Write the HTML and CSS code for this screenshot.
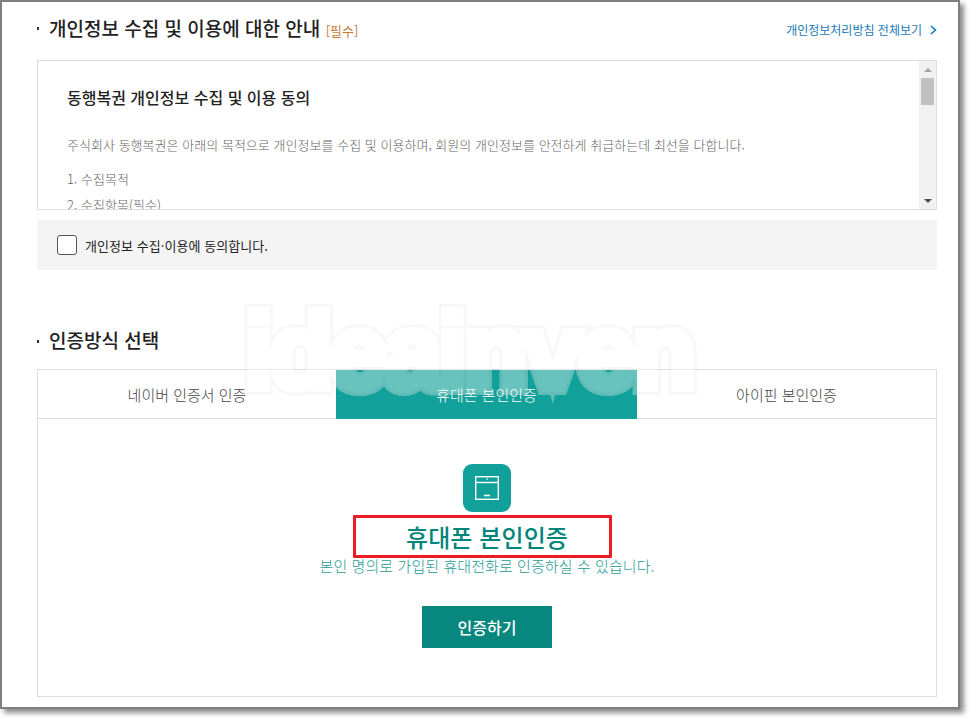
FILE: index.html
```html
<!DOCTYPE html>
<html lang="ko">
<head>
<meta charset="utf-8">
<title>인증방식 선택</title>
<link rel="stylesheet" href="styles.css">
</head>
<body>
<main class="frame">
  <section class="consent">
    <header class="head">
      <h2 class="heading">개인정보 수집 및 이용에 대한 안내 <span class="req">[필수]</span></h2>
      <a class="policy" href="#">개인정보처리방침 전체보기
        <svg class="chev" width="7" height="10" viewBox="0 0 7 10"><path d="M1 1l4.5 4L1 9" fill="none" stroke="#0a7cc0" stroke-width="1.6"/></svg>
      </a>
    </header>
    <div class="terms">
      <div class="terms-body">
        <h3 class="terms-title">동행복권 개인정보 수집 및 이용 동의</h3>
        <p class="terms-text intro">주식회사 동행복권은 아래의 목적으로 개인정보를 수집 및 이용하며, 회원의 개인정보를 안전하게 취급하는데 최선을 다합니다.</p>
        <p class="terms-text">1. 수집목적</p>
        <p class="terms-text">2. 수집항목(필수)</p>
      </div>
      <div class="scrollbar">
        <span class="arrow up"></span>
        <span class="thumb"></span>
        <span class="arrow down"></span>
      </div>
    </div>
    <label class="agree"><span class="check"></span>개인정보 수집·이용에 동의합니다.</label>
  </section>

  <section class="method">
    <h2 class="heading">인증방식 선택</h2>
    <div class="panel">
      <div class="tabs">
        <div class="tab">네이버 인증서 인증</div>
        <div class="tab active">휴대폰 본인인증</div>
        <div class="tab">아이핀 본인인증</div>
      </div>
      <div class="pane">
        <div class="icon">
          <svg width="24" height="24" viewBox="0 0 24 24" fill="none" stroke="#fff" stroke-width="1.4">
            <rect x="0.7" y="0.7" width="22.6" height="22.6"/>
            <path d="M1 6.5h22"/>
            <path d="M11.5 3h1.2"/>
            <path d="M9 19.5h6" stroke-width="1.6"/>
          </svg>
        </div>
        <h3 class="pane-title">휴대폰 본인인증</h3>
        <p class="pane-desc">본인 명의로 가입된 휴대전화로 인증하실 수 있습니다.</p>
        <button class="btn" type="button">인증하기</button>
      </div>
    </div>
  </section>

  <div class="watermark" aria-hidden="true" data-text="ideainven">ideainven</div>
</main>
</body>
</html>
```
FILE: styles.css
```css
* { box-sizing: border-box; }
html, body { margin: 0; padding: 0; background: #fff; }
body {
  width: 969px;
  height: 719px;
  overflow: hidden;
  font-family: "Noto Sans CJK KR", "Noto Sans", sans-serif;
  color: #222;
}
.frame {
  position: relative;
  width: 960px;
  height: 709px;
  padding: 0 21px 0 35px;
  border: 2px solid #7f7f7f;
  background: #fff;
  box-shadow: 4px 4px 5px rgba(0, 0, 0, .45);
}
.head {
  display: flex;
  justify-content: space-between;
  align-items: center;
  height: 58px;
  padding-bottom: 3px;
}
.heading {
  position: relative;
  margin: 0;
  padding-left: 12px;
  font-size: 19px;
  line-height: 26px;
  font-weight: 500;
  color: #222;
}
.heading::before {
  content: "";
  position: absolute;
  left: 0;
  top: 12px;
  width: 2px;
  height: 3px;
  background: #333;
}
.req { font-size: 13px; font-weight: 400; color: #c8793a; }
.policy {
  display: flex;
  align-items: center;
  gap: 8px;
  font-size: 12px;
  color: #1b79b8;
  text-decoration: none;
}
.terms {
  display: flex;
  height: 150px;
  border: 1px solid #ddd;
}
.terms-body {
  flex: 1;
  min-width: 0;
  overflow: hidden;
  padding: 25px 29px 0;
}
.terms-title {
  margin: 0 0 26px;
  font-size: 16px;
  line-height: 22px;
  font-weight: 500;
  color: #222;
}
.terms-text {
  margin: 0 0 6px;
  font-size: 13px;
  line-height: 20px;
  font-weight: 300;
  color: #666;
  letter-spacing: .03px;
  white-space: nowrap;
}
.terms-text.intro { margin-bottom: 14px; padding-top: 1px; }
.scrollbar {
  display: flex;
  flex-direction: column;
  align-items: center;
  width: 17px;
  flex: none;
  background: #f1f1f1;
  padding-top: 7px;
}
.arrow { width: 0; height: 0; border-left: 4px solid transparent; border-right: 4px solid transparent; }
.arrow.up { border-bottom: 4px solid #a3a3a3; }
.arrow.down { margin-top: auto; margin-bottom: 6px; border-top: 4px solid #505050; }
.thumb { width: 13px; height: 27px; margin-top: 6px; background: #c1c1c1; }
.agree {
  display: flex;
  align-items: center;
  gap: 8px;
  height: 50px;
  margin-top: 10px;
  padding-left: 20px;
  background: #f4f4f4;
  font-size: 13px;
  font-weight: 400;
  color: #222;
  letter-spacing: .05px;
}
.check {
  width: 20px;
  height: 20px;
  background: #fff;
  border: 1px solid #555;
  border-radius: 3px;
}
.method { margin-top: 57px; }
.method .heading::before { top: 13px; }
.panel {
  height: 328px;
  margin-top: 16px;
  border: 1px solid #ddd;
}
.tabs {
  display: grid;
  grid-template-columns: 298px 301px 1fr;
  height: 49px;
  border-bottom: 1px solid #ddd;
}
.tab {
  display: flex;
  align-items: center;
  justify-content: center;
  font-size: 15px;
  font-weight: 300;
  color: #444;
}
.tab.active {
  height: 49px;
  background: #12a19a;
  color: #fff;
}
.pane {
  display: flex;
  flex-direction: column;
  align-items: center;
  padding-top: 45px;
}
.icon {
  display: flex;
  align-items: center;
  justify-content: center;
  width: 48px;
  height: 48px;
  border-radius: 9px;
  background: #12a19a;
}
.pane-title {
  width: 259px;
  height: 43px;
  margin: 3px 9px 0 0;
  padding-left: 9px;
  border: 3px solid #ed1c24;
  border-radius: 1px;
  font-size: 24px;
  line-height: 37px;
  font-weight: 500;
  color: #00857c;
  text-align: center;
  letter-spacing: .1px;
}
.pane-desc {
  margin: 0;
  font-size: 15px;
  line-height: 16px;
  font-weight: 300;
  color: #1f9c95;
  letter-spacing: .08px;
}
.btn {
  width: 130px;
  height: 42px;
  margin-top: 32px;
  border: 0;
  background: #08877e;
  color: #fff;
  font: 500 16px "Noto Sans CJK KR", sans-serif;
}
.watermark {
  position: absolute;
  left: 242px;
  top: 285px;
  font-family: "Liberation Sans", sans-serif;
  font-size: 105px;
  line-height: 130px;
  font-weight: 700;
  letter-spacing: -4px;
  color: #fff;
  -webkit-text-stroke: 8px #fff;
  opacity: .36;
  pointer-events: none;
  white-space: nowrap;
  isolation: isolate;
}
.watermark::before {
  content: attr(data-text);
  position: absolute;
  left: 0;
  top: 0;
  z-index: -1;
  color: #eee;
  -webkit-text-stroke: 14px #eee;
}
```
